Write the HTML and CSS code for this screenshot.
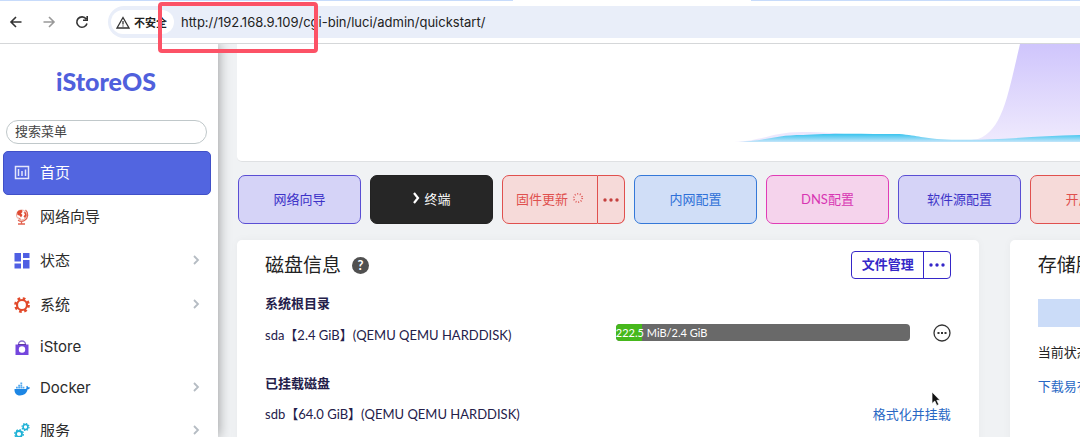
FILE: index.html
```
<!DOCTYPE html>
<html lang="zh-CN">
<head>
    <meta charset="UTF-8">
    <meta name="viewport" content="width=device-width, initial-scale=1.0">
    <title>iStoreOS</title>
    <link rel="stylesheet" href="styles.css">
</head>
<body>
    <!-- Browser bar -->
    <header class="browser">
        <div class="tab-strip"><span class="tab-active"></span></div>
        <div class="toolbar">
            <button class="tool" aria-label="后退"><svg width="14" height="14" viewBox="0 0 14 14"><path d="M12.500 7H2M7 2L2 7l5 5" /></svg></button>
            <button class="tool tool-off" aria-label="前进"><svg width="14" height="14" viewBox="0 0 14 14"><path d="M1.500 7H12M7 2l5 5-5 5" /></svg></button>
            <button class="tool" aria-label="刷新"><svg width="14" height="14" viewBox="0 0 14 14"><path d="M12 8.500A5.200 5.200 0 1 1 11.200 4M12.200 1v4.300H8" /></svg></button>
            <div class="address">
                <button class="insecure">
                    <svg width="14" height="13" viewBox="0 0 14 13"><path d="M7 1.500L13 12H1zM7 5v3.500M7 9.500v1" /></svg>
                    不安全
                </button>
                <input class="url" type="text" aria-label="地址" value="http://192.168.9.109/cgi-bin/luci/admin/quickstart/">
            </div>
        </div>
        <div class="highlight"></div>
    </header>

    <div class="page">
        <!-- Sidebar -->
        <aside class="sidebar">
            <a class="brand" href="#">iStoreOS</a>
            <input class="search" type="text" placeholder="搜索菜单" aria-label="搜索菜单">
            <nav class="menu">
                <a class="menu-item active" href="#">
                    <svg class="icon" viewBox="0 0 16 16" fill="none" stroke="#e4e6fb" stroke-width="1.500"><path d="M1.500 1.500h13v12h-13zM4.500 4v7M8 6v5M11.500 4.500v6.500" /></svg>
                    <span>首页</span>
                </a>
                <a class="menu-item" href="#">
                    <svg class="icon" viewBox="0 0 16 16"><circle cx="7.500" cy="6" r="5" fill="#fff" stroke="#e8a79b" /><path d="M3 3.500C4 1.500 6 .8 8 1.200L8.500 3 7 4.500 8.500 6 7 8.500 5.500 6.500 3.500 6zM9.500 3l2.500.5.5 3L11 9 9.500 7.500 11 5.500zM4 8l3 2-1 .5z" fill="#df4a32" /><path d="M11.500 1a6.500 6.500 0 0 1-1 10.500c-2 1.200-4.500 1-6.500-.2M7.500 12v2.500M4 15h7" fill="none" stroke="#e26350" stroke-width="1.300" /></svg>
                    <span>网络向导</span>
                </a>
                <a class="menu-item" href="#">
                    <svg class="icon" viewBox="0 0 16 16" fill="#4f5fe3"><path d="M.5 0h6.500v8.500H.5zM9 0h6.500v5H9zM.5 10.500H7v5H.5zM9 7h6.500v8.500H9z" /></svg>
                    <span>状态</span>
                    <svg class="arrow" viewBox="0 0 8 10"><path d="M2 1l4 4-4 4" /></svg>
                </a>
                <a class="menu-item" href="#">
                    <svg class="icon" viewBox="0 0 16 16" fill="none" stroke="#e24a2b"><circle cx="8" cy="8" r="6.500" stroke-width="2.800" stroke-dasharray="2.600 2.500" /><circle cx="8" cy="8" r="5" stroke-width="2.200" /></svg>
                    <span>系统</span>
                    <svg class="arrow" viewBox="0 0 8 10"><path d="M2 1l4 4-4 4" /></svg>
                </a>
                <a class="menu-item latin" href="#">
                    <svg class="icon" viewBox="0 0 16 16"><path d="M4.500 6V4.500a3.500 3.500 0 0 1 7 0V6" fill="none" stroke="#8a6fd0" stroke-width="1.300" /><path d="M1.500 4.500h13v10.500h-13z" fill="#7446dd" /><path d="M4 4.500h8" stroke="#5f3a9e" /><circle cx="8" cy="9.500" r="3.200" fill="#fff" /></svg>
                    <span>iStore</span>
                </a>
                <a class="menu-item latin" href="#">
                    <svg class="icon" viewBox="0 0 16 16" fill="#1d86e4"><path d="M.5 8h11c1 0 1.300-1.200.8-2.500l.8-.8 1.200 1.500 1.700.3c-.3 1.300-1.200 1.800-2.400 1.800C12.800 12.500 10 14.500 6 14.500 2.300 14.500.3 12 .5 8z" /><path d="M2 5.800h1.800v1.700H2zM4.200 5.800H6v1.700H4.200zM6.400 5.800h1.800v1.700H6.400zM8.600 5.800h1.800v1.700H8.600zM4.200 3.700H6v1.700H4.200zM6.400 3.700h1.800v1.700H6.400zM6.400 1.600h1.800v1.700H6.400z" fill="#55a9ee" /></svg>
                    <span>Docker</span>
                    <svg class="arrow" viewBox="0 0 8 10"><path d="M2 1l4 4-4 4" /></svg>
                </a>
                <a class="menu-item" href="#">
                    <svg class="icon" viewBox="0 0 16 16" fill="none" stroke="#20b2d6"><circle cx="5" cy="11" r="3" stroke-width="1.800" /><circle cx="5" cy="11" r="4.300" stroke-width="1.300" stroke-dasharray="1.700 1.670" /><circle cx="11.500" cy="4" r="2.400" stroke-width="1.500" /><circle cx="11.500" cy="4" r="3.500" stroke-width="1.200" stroke-dasharray="1.400 1.340" /></svg>
                    <span>服务</span>
                    <svg class="arrow" viewBox="0 0 8 10"><path d="M2 1l4 4-4 4" /></svg>
                </a>
            </nav>
        </aside>

        <!-- Dashboard -->
        <main class="main">
            <section class="chart">
                <svg viewBox="0 0 843 117" preserveAspectRatio="none">
                    <defs>
                        <linearGradient id="purple" x1="0" y1="0" x2="0" y2="1">
                            <stop offset="0" stop-color="#cfc5fc" />
                            <stop offset="1" stop-color="#efeafd" />
                        </linearGradient>
                        <linearGradient id="blue" x1="0" y1="0" x2="0" y2="1">
                            <stop offset="0" stop-color="#35c3ee" />
                            <stop offset="1" stop-color="#c4e5fa" />
                        </linearGradient>
                    </defs>
                    <path d="M497 98C530 96 535 88 565 88C610 88 640 95 690 96C720 98 735 96 741 95C766 86 771 50 783 0H843V98z" fill="url(#purple)" />
                    <path d="M497 98C530 97 537 91 566 91C590 89 630 90 662 90C682 92 688 94 700 95C750 98 790 92 843 91V98z" fill="url(#blue)" />
                </svg>
            </section>

            <div class="actions">
                <button class="action purple">网络向导</button>
                <button class="action dark"><svg width="8" height="12" viewBox="0 0 8 12"><path d="M2 1l4 5-4 5" fill="none" stroke="#fff" stroke-width="2.200" /></svg>终端</button>
                <div class="action-group">
                    <button class="action red">固件更新 <svg width="12" height="12" viewBox="0 0 12 12"><circle cx="6" cy="6" r="4.200" fill="none" stroke="#e0605e" stroke-width="1.800" stroke-dasharray="1 1.640" /></svg></button>
                    <button class="action red more" aria-label="更多"><svg width="16" height="4" viewBox="0 0 16 4" fill="#c5403f"><circle cx="2" cy="2" r="1.700" /><circle cx="8" cy="2" r="1.700" /><circle cx="14" cy="2" r="1.700" /></svg></button>
                </div>
                <button class="action blue">内网配置</button>
                <button class="action pink">DNS配置</button>
                <button class="action purple">软件源配置</button>
                <button class="action red">开启沙箱</button>
            </div>

            <div class="cards">
                <section class="card">
                    <div class="card-head">
                        <h2>磁盘信息</h2>
                        <button class="help" aria-label="帮助">?</button>
                        <div class="file-group">
                            <button>文件管理</button>
                            <button class="file-more" aria-label="更多"><svg width="16" height="4" viewBox="0 0 16 4" fill="#3527c8"><circle cx="2" cy="2" r="1.700" /><circle cx="8" cy="2" r="1.700" /><circle cx="14" cy="2" r="1.700" /></svg></button>
                        </div>
                    </div>

                    <h3>系统根目录</h3>
                    <div class="disk">
                        <span class="disk-name">sda【2.4 GiB】(QEMU QEMU HARDDISK)</span>
                        <div class="usage">
                            <div class="used" style="width: 9%"></div>
                            <span class="usage-text">222.5 MiB/2.4 GiB</span>
                        </div>
                        <button class="disk-more" aria-label="更多"><svg width="18" height="18" viewBox="0 0 18 18"><circle cx="9" cy="9" r="8" fill="none" stroke="#333" stroke-width="1.300" /><path d="M4.500 9h2M8 9h2M11.500 9h2" stroke="#333" stroke-width="1.800" /></svg></button>
                    </div>

                    <h3 class="mounted">已挂载磁盘</h3>
                    <div class="disk">
                        <span class="disk-name">sdb【64.0 GiB】(QEMU QEMU HARDDISK)</span>
                        <a class="format" href="#">格式化并挂载</a>
                    </div>
                    <svg class="cursor" viewBox="0 0 10 16"><path d="M1 1v11.500l2.800-2.500 2 4.500 2-1-2-4.200H9z" fill="#111" stroke="#fff" stroke-width=".7" /></svg>
                </section>

                <section class="card">
                    <div class="card-head"><h2>存储服务</h2></div>
                    <div class="storage-box"></div>
                    <p class="storage-text">当前状态</p>
                    <a class="storage-link" href="#">下载易有云</a>
                </section>
            </div>
        </main>
    </div>
</body>
</html>
```
FILE: styles.css
```
* {
    box-sizing: border-box;
}
body {
    display: flex;
    flex-direction: column;
    height: 100vh;
    margin: 0;
    overflow: hidden;
    font-family: Lato, "Noto Sans CJK SC", sans-serif;
    font-size: 13px;
    color: #222;
    background-color: #f0f2f4;
}
button,
input {
    margin: 0;
    padding: 0;
    border: none;
    background: none;
    font: inherit;
    color: inherit;
}
button {
    cursor: pointer;
}
a {
    text-decoration: none;
}
svg {
    flex-shrink: 0;
}

/* Browser bar */
.browser {
    position: relative;
    z-index: 2;
    background-color: #fff;
    border-bottom: 1px solid #d5d7d9;
}
.tab-strip {
    display: flex;
    justify-content: center;
    height: 1px;
    background-color: #c7dbfb;
}
.tab-active {
    width: 22%;
    margin-left: 17%;
    background-color: #fff;
}
.toolbar {
    display: flex;
    align-items: center;
    gap: 19px;
    padding: 5px 0 5px 9px;
}
.tool {
    display: flex;
}
.tool svg {
    fill: none;
    stroke: #333;
    stroke-width: 1.6;
}
.tool-off svg {
    stroke: #999;
}
.address {
    display: flex;
    flex: 1;
    align-items: center;
    gap: 7px;
    height: 32px;
    padding-left: 3px;
    border-radius: 16px 0 0 16px;
    background-color: #e9eef9;
}
.insecure {
    display: flex;
    align-items: center;
    gap: 4px;
    height: 24px;
    padding: 0 7px 0 5px;
    border-radius: 12px;
    background-color: #fff;
    font-size: 11px;
    font-weight: bold;
}
.insecure svg {
    fill: none;
    stroke: #333;
    stroke-width: 1.3;
}
.url {
    flex: 1;
    font-family: Inter, sans-serif;
    font-size: 13px;
}
.highlight {
    position: absolute;
    top: 2px;
    left: 158px;
    width: 160px;
    height: 51px;
    border: 4px solid #fc5266;
    border-radius: 4px;
}

.page {
    display: flex;
    flex: 1;
    min-height: 0;
}

/* Sidebar */
.sidebar {
    z-index: 1;
    width: 218px;
    flex-shrink: 0;
    background-color: #fff;
    box-shadow: 0 0 12px rgba(0, 0, 0, 0.4);
}
.brand {
    display: block;
    padding: 19px 6px 0 0;
    font-size: 25px;
    font-weight: 900;
    line-height: 36px;
    text-align: center;
    color: #5060dc;
}
.search {
    display: block;
    width: 201px;
    height: 24px;
    margin: 21px 0 7px 6px;
    padding: 0 8px 3px;
    border: 1px solid #c0c8ca;
    border-radius: 12px;
}
.search::placeholder {
    color: #444;
}
.menu-item {
    display: flex;
    align-items: center;
    gap: 10px;
    height: 44px;
    margin: 0 7px 0 3px;
    padding: 0 11px;
    font-size: 15px;
    color: #2b2b2b;
}
.menu-item span {
    padding-bottom: 3px;
}
.menu-item.latin {
    height: 41px;
    font-family: Inter, sans-serif;
}
.menu-item.active {
    border: 1px solid #4050c8;
    border-radius: 5px;
    padding: 0 10px;
    background-color: #5265e0;
    color: #fff;
}
.icon {
    width: 16px;
    height: 16px;
}
.arrow {
    width: 8px;
    height: 10px;
    margin-bottom: 3px;
    margin-left: auto;
    fill: none;
    stroke: #b5bcc3;
    stroke-width: 1.8;
}

/* Dashboard */
.main {
    flex: 1;
    min-width: 0;
    padding-left: 19px;
    overflow: hidden;
}
.chart {
    border-bottom: 1px solid #dfe1e3;
    border-radius: 0 0 0 5px;
    background-color: #fff;
}
.chart svg {
    display: block;
    width: 100%;
    height: 117px;
}
.actions {
    display: flex;
    gap: 9px;
    padding: 13px 0 16px 1px;
}
.action {
    display: flex;
    align-items: center;
    justify-content: center;
    gap: 4px;
    width: 123px;
    height: 49px;
    padding-bottom: 3px;
    flex-shrink: 0;
    border: 1px solid;
    border-radius: 7px;
}
.purple {
    border-color: #5a4ed4;
    background-color: #d5d3f7;
    color: #3c32c8;
}
.dark {
    border-color: #222;
    background-color: #262626;
    color: #fff;
}
.red {
    border-color: #e0504e;
    background-color: #f6dad9;
    color: #e0504e;
}
.blue {
    border-color: #3478d8;
    background-color: #d0def7;
    color: #2d70d8;
}
.pink {
    border-color: #e03cb6;
    background-color: #f5d3ec;
    color: #d835b3;
}
.action-group {
    display: flex;
    width: 123px;
    flex-shrink: 0;
}
.action-group .action {
    flex: 1;
    border-radius: 7px 0 0 7px;
}
.action-group .more {
    flex: 0 0 27px;
    padding-bottom: 0;
    border-left: none;
    border-radius: 0 7px 7px 0;
}

/* The second card runs on past the right edge */
.cards {
    display: grid;
    grid-template-columns: 88% 88%;
    gap: 31px;
}
.card {
    position: relative;
    min-height: 260px;
    padding: 10px 28px;
    border-radius: 5px;
    background-color: #fff;
    box-shadow: 0 0 8px rgba(0, 0, 0, 0.04);
}
.card-head {
    display: flex;
    align-items: center;
    height: 30px;
}
.card h2 {
    margin: 0;
    padding-bottom: 3px;
    font-size: 19px;
    font-weight: normal;
}
.help {
    width: 17px;
    height: 17px;
    margin-left: 11px;
    border-radius: 50%;
    background-color: #505050;
    font-weight: bold;
    line-height: 17px;
    color: #fff;
}
.file-group {
    display: flex;
    height: 28px;
    margin-left: auto;
    border: 1px solid #3527c8;
    border-radius: 4px;
    color: #3527c8;
}
.file-group button {
    padding: 0 9px 3px 10px;
    font-weight: bold;
}
.file-group .file-more {
    display: flex;
    align-items: center;
    padding: 0 5px;
    border-left: 1px solid #3527c8;
}
.card h3 {
    margin: 13px 0 11px;
    font-size: 13px;
    font-weight: bold;
    line-height: 20px;
    color: #24204a;
}
.card h3.mounted {
    margin-top: 29px;
    margin-bottom: 10px;
}
.disk {
    display: flex;
    align-items: center;
    height: 20px;
    color: #24204a;
}
.disk-name {
    flex: 1;
}
.usage {
    position: relative;
    width: 294px;
    height: 17px;
    margin-bottom: 3px;
    border-radius: 4px;
    overflow: hidden;
    background-color: #696969;
}
.used {
    height: 100%;
    background-color: #46b81c;
}
.usage-text {
    position: absolute;
    top: 0;
    left: 0;
    font-size: 11px;
    line-height: 17px;
    color: #fff;
}
.disk-more {
    display: flex;
    margin-bottom: 3px;
    margin-left: 23px;
}
.format,
.storage-link {
    color: #2867c4;
}
.cursor {
    position: absolute;
    top: 151px;
    right: 38px;
    width: 10px;
    height: 16px;
}
.storage-box {
    height: 28px;
    margin: 19px 0 15px;
    background-color: #cbdcf8;
}
.storage-text {
    margin: 0 0 14px;
    line-height: 20px;
}
.storage-link {
    line-height: 20px;
}
```
